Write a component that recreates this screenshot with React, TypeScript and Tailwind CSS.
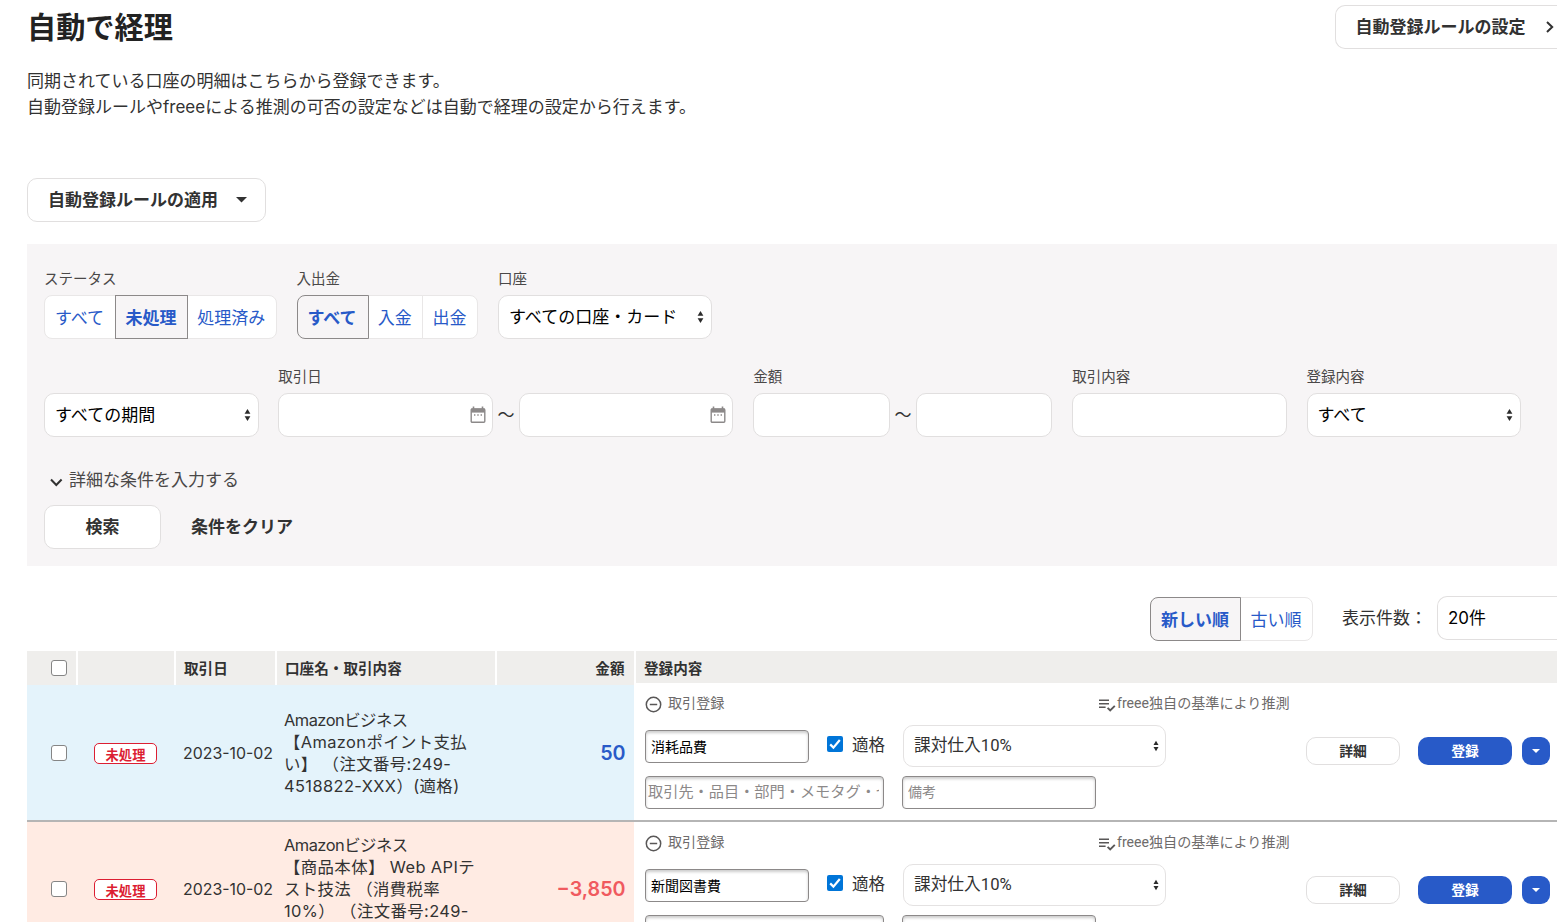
import React from 'react';

const UpDown = ({ className = '' }) => (
  <svg className={className} width="7" height="14" viewBox="0 0 7 14" fill="#2b2b2b">
    <path d="M3.5 1 L6.4 5.8 H0.6 Z" />
    <path d="M3.5 13 L6.4 8.2 H0.6 Z" />
  </svg>
);

const CalendarIcon = () => (
  <svg width="16" height="18" viewBox="0 0 16 18" fill="none">
    <path d="M3.5 0.4 V3 M12.5 0.4 V3" stroke="#8c8989" strokeWidth="1.6" />
    <rect x="1.2" y="2.9" width="13.6" height="13.4" rx="1" stroke="#8c8989" strokeWidth="1.4" />
    <path d="M1.2 2.5 H14.8 V6.6 H1.2 Z" fill="#8c8989" />
    <path d="M4 9 H5.4 M7.3 9 H8.7 M10.6 9 H12" stroke="#8c8989" strokeWidth="1.3" />
  </svg>
);

const ListCheckIcon = () => (
  <svg className="mt-[2px]" width="18" height="15" viewBox="0 0 18 15" fill="none" stroke="#595757" strokeWidth="1.6">
    <path d="M1 2.3 H11 M1 5.8 H11 M1 9.3 H7.6" />
    <path d="M9.6 9.8 L12.2 12.4 L16.8 7.8" strokeWidth="1.9" />
  </svg>
);

const Select = ({ label, width }) => (
  <div className={`${width} h-11 flex items-center justify-between rounded-[10px] border border-[#e1dfdf] bg-white pl-[10px] pr-[7px] text-black`}>
    <span className="text-[17px] leading-6">{label}</span>
    <UpDown />
  </div>
);

const DateInput = () => (
  <div className="w-[214.5px] h-11 flex items-center justify-end rounded-[10px] border border-[#e1dfdf] bg-white pr-[6px]">
    <CalendarIcon />
  </div>
);

const Field = ({ label, children }) => (
  <div>
    <div className="h-5 mb-[6px] text-[14.5px] leading-5 text-[#4a4848]">{label}</div>
    <div className="flex items-center">{children}</div>
  </div>
);

const Tilde = () => <span className="w-[26.2px] text-center text-[17px] leading-6">〜</span>;

const Segments = ({ items }) => (
  <div className="flex h-11 text-[17px] text-[#285ac8]">
    {items.map((item, i) => (
      <div
        key={item.label}
        className={`${item.width} flex items-center justify-center border pt-[3px] pr-px whitespace-nowrap ${
          item.selected
            ? 'relative border-[#8c8989] bg-[#f7f5f6] font-bold'
            : 'border-[#e9e7e7] bg-white'
        } ${i > 0 ? '-ml-px' : 'rounded-l-lg'} ${i === items.length - 1 ? 'rounded-r-lg' : ''}`}
      >
        {item.label}
      </div>
    ))}
  </div>
);

const Checkbox = () => (
  <span className="block w-4 h-4 rounded-[3px] border border-[#858585] bg-white"></span>
);

const Head = ({ className, children = null }) => (
  <div className={`${className} h-[35px] bg-[#efeeec] text-[14.6px] font-bold flex items-center`}>
    {children}
  </div>
);

const transactions = [
  {
    id: 1,
    date: '2023-10-02',
    lines: ['Amazonビジネス', '【Amazonポイント支払', 'い】 （注文番号:249-', '4518822-XXX）(適格)'],
    amount: '50',
    color: 'bg-[#e4f3fb]',
    amountColor: 'text-[#285ac8]',
    account: '消耗品費',
  },
  {
    id: 2,
    date: '2023-10-02',
    lines: ['Amazonビジネス', '【商品本体】 Web APIテ', 'スト技法 （消費税率', '10%） （注文番号:249-'],
    amount: '−3,850',
    color: 'bg-[#ffebe3]',
    amountColor: 'text-[#f05a5f]',
    account: '新聞図書費',
  },
];

const TransactionRow = ({ row, className, linesClassName, formClassName }) => (
  <div className={`${className} flex`}>
    <div className={`w-[607px] shrink-0 flex items-center ${row.color}`}>
      <div className="w-[51px] pl-6">
        <Checkbox />
      </div>
      <div className="w-[98px] pl-4 pt-[2px]">
        <div className="w-[63px] h-[21px] flex items-center justify-center rounded-[5px] border border-[#dc1e32] bg-white pt-[2px] text-[13.3px] leading-4 font-bold text-[#dc1e32]">
          未処理
        </div>
      </div>
      <div className="w-[101px] pl-[7px] pt-[3px] text-[15.9px] whitespace-nowrap">{row.date}</div>
      <div className={`${linesClassName} w-[220px] pl-[7px] text-[16.4px] leading-[22px] whitespace-nowrap`}>
        {row.lines.map((line, i) => (
          <div key={line} className={i === 0 ? 'tracking-[-0.5px]' : 'tracking-[0.4px]'}>
            {line}
          </div>
        ))}
      </div>
      <div className={`flex-1 pr-[8.5px] pt-[2px] text-right text-[19.7px] font-semibold ${row.amountColor}`}>{row.amount}</div>
    </div>

    <div className={`${formClassName} flex-1 pl-[11px] text-[#323232] font-[Roboto,'Noto_Sans_CJK_JP',sans-serif]`}>
      <div className="flex items-center h-5 text-[14.1px] text-[#6e6b6b]">
        <svg className="mr-[5px]" width="17" height="17" viewBox="0 0 17 17" fill="none" stroke="#595757" strokeWidth="1.5">
          <circle cx="8.5" cy="8.5" r="7.2" />
          <path d="M4.8 8.5 H12.2" />
        </svg>
        <span className="ml-px w-[430px]">取引登録</span>
        <ListCheckIcon />
        <span className="ml-px">freee独自の基準により推測</span>
      </div>
      <div className="flex items-start mt-[11px]">
        <div>
          <div className="flex items-center h-[42px]">
            <input
              className="w-[164px] h-[33px] rounded-[4px] border border-[#8c8989] bg-white pl-[5px] text-[14px] text-black shadow-[inset_0_2px_3px_rgba(0,0,0,0.2)]"
              defaultValue={row.account}
            />
            <svg className="ml-[18px] mb-[5px]" width="16" height="16" viewBox="0 0 16 16" fill="none">
              <rect width="16" height="16" rx="2" fill="#0075d8" />
              <path d="M3.2 8.4 L6.4 11.6 L12.8 4" stroke="#fff" strokeWidth="2.2" />
            </svg>
            <span className="ml-[9px] w-[51px] text-[16.5px] leading-6">適格</span>
            <div className="w-[263px] h-[42px] flex items-center justify-between rounded-[10px] border border-[#e4e2e2] bg-white pl-[10px] pr-[6px]">
              <span className="text-[16.7px] leading-6">課対仕入10%</span>
              <UpDown className="w-[6px] h-3" />
            </div>
          </div>
          <div className="flex mt-[9px]">
            <input
              className="w-[239px] h-[33px] rounded-[4px] border border-[#8c8989] bg-white pl-[2px] pr-1 pb-[2px] text-[15.2px] placeholder:text-[#8c8989] shadow-[inset_0_2px_3px_rgba(0,0,0,0.2)]"
              placeholder="取引先・品目・部門・メモタグ・セグメント"
            />
            <input
              className="ml-[18px] w-[194px] h-[33px] rounded-[4px] border border-[#8c8989] bg-white px-[5px] pb-[2px] text-[14px] placeholder:text-[#8c8989] shadow-[inset_0_2px_3px_rgba(0,0,0,0.2)]"
              placeholder="備考"
            />
          </div>
        </div>
        <div className="ml-[140px] mt-3 flex h-7 text-[13.8px] font-bold">
          <div className="w-[94px] flex items-center justify-center rounded-[10px] border border-[#e1dfdf] bg-white">詳細</div>
          <div className="ml-[18px] w-[94px] flex items-center justify-center rounded-[10px] bg-[#285ac8] text-white">登録</div>
          <div className="ml-[10px] w-7 flex items-center justify-center rounded-[9px] bg-[#285ac8]">
            <svg width="8" height="4" viewBox="0 0 8 4" fill="#fff">
              <path d="M0 0 H8 L4 4 Z" />
            </svg>
          </div>
        </div>
      </div>
    </div>
  </div>
);

export default function App() {
  return (
    <div className="w-[1557px] h-[922px] overflow-hidden bg-white pl-[27px] text-[#323232] font-[Inter,'Noto_Sans_CJK_JP',sans-serif]">
      <header className="flex justify-between h-[65px]">
        <h1 className="pt-[6px] text-[29.2px] leading-[44px] font-bold text-[#222]">自動で経理</h1>
        <div className="mt-[5px] w-[222.5px] h-11 flex items-center rounded-l-[10px] border border-r-0 border-[#e1dfdf] pl-5 text-[17px] font-bold whitespace-nowrap">
          <span className="pt-[2px]">自動登録ルールの設定</span>
          <svg className="ml-5" width="9" height="14" viewBox="0 0 9 14" fill="none" stroke="#323232" strokeWidth="2">
            <path d="M1 2 L6.2 7 L1 12" />
          </svg>
        </div>
      </header>

      <p className="pt-[3px] text-[17px] leading-[26px]">
        同期されている口座の明細はこちらから登録できます。
        <br />
        自動登録ルールやfreeeによる推測の可否の設定などは自動で経理の設定から行えます。
      </p>

      <div className="mt-[58px] w-[239px] h-11 flex items-center rounded-[10px] border border-[#e1dfdf] pl-5 text-[17px] font-bold">
        <span className="pt-[2px]">自動登録ルールの適用</span>
        <svg className="ml-[18px]" width="11" height="6" viewBox="0 0 11 6" fill="#323232">
          <path d="M0 0 H11 L5.5 5.6 Z" />
        </svg>
      </div>

      <section className="mt-[22px] h-[322px] bg-[#f7f5f6] pl-[17px] pt-[25px]">
        <div className="flex gap-5">
          <Field label="ステータス">
            <Segments
              items={[
                { label: 'すべて', width: 'w-[72px]' },
                { label: '未処理', width: 'w-[73px]', selected: true },
                { label: '処理済み', width: 'w-[89.5px]' },
              ]}
            />
          </Field>
          <Field label="入出金">
            <Segments
              items={[
                { label: 'すべて', width: 'w-[72px]', selected: true },
                { label: '入金', width: 'w-[55.5px]' },
                { label: '出金', width: 'w-[56px]' },
              ]}
            />
          </Field>
          <Field label="口座">
            <Select label="すべての口座・カード" width="w-[214px]" />
          </Field>
        </div>

        <div className="mt-7 flex gap-[19.8px]">
          <Field label="">
            <Select label="すべての期間" width="w-[214.5px]" />
          </Field>
          <Field label="取引日">
            <DateInput />
            <Tilde />
            <DateInput />
          </Field>
          <Field label="金額">
            <div className="w-[136.5px] h-11 rounded-[10px] border border-[#e1dfdf] bg-white"></div>
            <Tilde />
            <div className="w-[136.5px] h-11 rounded-[10px] border border-[#e1dfdf] bg-white"></div>
          </Field>
          <Field label="取引内容">
            <div className="w-[214.5px] h-11 rounded-[10px] border border-[#e1dfdf] bg-white"></div>
          </Field>
          <Field label="登録内容">
            <Select label="すべて" width="w-[214.5px]" />
          </Field>
        </div>

        <div className="mt-[32px] flex items-center h-6 pl-[6px] text-[17px] text-[#4a4848]">
          <svg className="mt-[2px] mr-[6px]" width="13" height="9" viewBox="0 0 13 9" fill="none" stroke="#323232" strokeWidth="2">
            <path d="M1 1.5 L6.3 7 L11.6 1.5" />
          </svg>
          詳細な条件を入力する
        </div>
        <div className="mt-[12px] flex items-center text-[17px] font-bold">
          <div className="w-[117px] h-11 flex items-center justify-center rounded-[10px] border border-[#e1dfdf] bg-white pt-[2px]">検索</div>
          <div className="ml-[30px] pt-[2px]">条件をクリア</div>
        </div>
      </section>

      <div className="flex mt-[30px] h-[55px] pl-[1123px]">
        <div className="mt-px">
          <Segments
            items={[
              { label: '新しい順', width: 'w-[91px]', selected: true },
              { label: '古い順', width: 'w-[73px]' },
            ]}
          />
        </div>
        <div className="ml-[29px] w-[95px] pt-[10px] text-[17px] leading-6 whitespace-nowrap">表示件数：</div>
        <div className="flex-1 h-11 flex items-center rounded-l-[10px] border border-r-0 border-[#e1dfdf] pl-[10px] pt-px text-[16.9px] text-black">
          20件
        </div>
      </div>

      <div className="flex h-[34px]">
        <Head className="w-[49px] mr-[2px] pl-6 pb-[2px]">
          <Checkbox />
        </Head>
        <Head className="w-[96px] mr-[2px]" />
        <Head className="w-[99px] mr-[2px] pl-2 pt-[2px]">取引日</Head>
        <Head className="w-[218px] mr-[2px] pl-2 pt-[2px]">口座名・取引内容</Head>
        <Head className="w-[137px] mr-[2px] pr-[9.5px] pt-[2px] justify-end">金額</Head>
        <div className="flex-1 h-8 bg-[#efeeec] pl-2 pt-[2px] text-[14.6px] leading-8 font-bold">登録内容</div>
      </div>
      <TransactionRow row={transactions[0]} className="h-[135px]" linesClassName="h-[88px]" formClassName="pt-[9px]" />
      <TransactionRow
        row={transactions[1]}
        className="h-[135px] border-t-2 border-[#b5b5b5]"
        linesClassName="h-[110px]"
        formClassName="pt-[11px]"
      />
    </div>
  );
}
